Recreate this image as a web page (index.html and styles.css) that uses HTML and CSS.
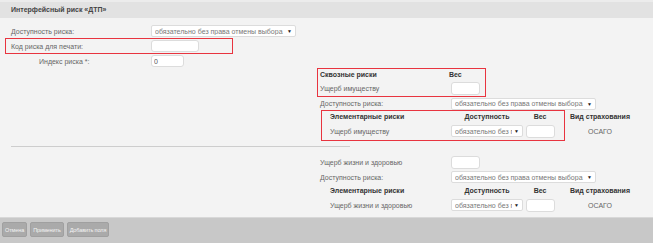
FILE: index.html
```html
<!DOCTYPE html>
<html lang="ru">
<head>
    <meta charset="UTF-8">
    <title>Интерфейсный риск</title>
    <link rel="stylesheet" href="styles.css">
</head>
<body>
    <div class="panel-title">Интерфейсный риск «ДТП»</div>

    <div class="form">
        <div class="row">
            <span class="label">Доступность риска:</span>
            <div class="select wide"><span class="select-text">обязательно без права отмены выбора</span><span class="caret">▼</span></div>
        </div>
        <div class="row marked">
            <span class="label">Код риска для печати:</span>
            <input class="field code" type="text">
        </div>
        <div class="row">
            <span class="label indent">Индекс риска *:</span>
            <input class="field index" type="text" value="0">
        </div>

        <div class="side">
            <div class="through marked">
                <div class="through-row head">
                    <span class="through-name">Сквозные риски</span>
                    <span>Вес</span>
                </div>
                <div class="through-row">
                    <span class="through-name">Ущерб имуществу</span>
                    <input class="field weight" type="text">
                </div>
            </div>
            <div class="side-row">
                <span class="side-label">Доступность риска:</span>
                <div class="select wide"><span class="select-text">обязательно без права отмены выбора</span><span class="caret">▼</span></div>
            </div>
            <div class="elem">
                <div class="elem-grid marked">
                    <span class="cell th left">Элементарные риски</span>
                    <span class="cell th">Доступность</span>
                    <span class="cell th">Вес</span>
                    <span class="cell left">Ущерб имуществу</span>
                    <span class="cell"><span class="select short"><span class="select-text">обязательно без г</span><span class="caret">▼</span></span></span>
                    <span class="cell"><input class="field weight" type="text"></span>
                </div>
                <div class="elem-kind">
                    <span class="cell th">Вид страхования</span>
                    <span class="cell">ОСАГО</span>
                </div>
            </div>
        </div>

        <hr class="divider">

        <div class="side">
            <div class="side-row life">
                <span class="side-label">Ущерб жизни и здоровью</span>
                <input class="field weight" type="text">
            </div>
            <div class="side-row">
                <span class="side-label">Доступность риска:</span>
                <div class="select wide"><span class="select-text">обязательно без права отмены выбора</span><span class="caret">▼</span></div>
            </div>
            <div class="elem">
                <div class="elem-grid">
                    <span class="cell th left">Элементарные риски</span>
                    <span class="cell th">Доступность</span>
                    <span class="cell th">Вес</span>
                    <span class="cell left">Ущерб жизни и здоровью</span>
                    <span class="cell"><span class="select short"><span class="select-text">обязательно без г</span><span class="caret">▼</span></span></span>
                    <span class="cell"><input class="field weight" type="text"></span>
                </div>
                <div class="elem-kind">
                    <span class="cell th">Вид страхования</span>
                    <span class="cell">ОСАГО</span>
                </div>
            </div>
        </div>
    </div>

    <div class="footer">
        <button class="btn">Отмена</button>
        <button class="btn">Применить</button>
        <button class="btn">Добавить поля</button>
    </div>
</body>
</html>
```

FILE: styles.css
```css
/* Base */
body {
    margin: 0;
    background: #f3f3f3;
    font-family: "Liberation Sans", Arial, sans-serif;
    font-size: 7px;
    color: #666;
}

.panel-title {
    height: 16px;
    line-height: 16px;
    padding-left: 11px;
    border-top: 2px solid #ececec;
    background: #e2e2e2;
    font-weight: bold;
    color: #444;
}

.form {
    padding-top: 6px;
}

/* Left column rows */
.row {
    display: flex;
    align-items: center;
    height: 14px;
    padding-left: 11px;
}

.label {
    box-sizing: border-box;
    width: 140px;
}

.label.indent {
    padding-left: 28px;
}

.row.marked {
    width: 221px;
    margin-left: 5px;
    padding-left: 5px;
}

.marked {
    border: 1px solid #e8343f !important;
}

/* Controls */
.field {
    box-sizing: border-box;
    height: 12px;
    margin: 0;
    padding: 0 2px;
    border: 1px solid #dcdcdc;
    border-radius: 3px;
    background: #fff;
    font-family: inherit;
    font-size: 7px;
    color: #555;
    outline: none;
}

.field.code {
    width: 48px;
}

.field.index {
    width: 33px;
}

.field.weight {
    width: 29px;
    height: 13px;
}

.select {
    box-sizing: border-box;
    display: flex;
    align-items: center;
    height: 12px;
    padding: 0 3px;
    border: 1px solid #dcdcdc;
    border-radius: 2px;
    background: #fff;
    color: #777;
}

.select.wide {
    width: 145px;
}

.select.short {
    width: 72px;
}

.select-text {
    flex: 1;
    overflow: hidden;
    white-space: nowrap;
}

.caret {
    margin-left: 2px;
    font-size: 5px;
    color: #222;
}

/* Right side blocks */
.side {
    margin-left: 317px;
}

.through {
    box-sizing: border-box;
    width: 169px;
    padding-left: 2px;
    border: 1px solid transparent;
}

.through-row {
    display: flex;
    align-items: center;
    height: 16px;
}

.through-row.head {
    height: 11px;
    font-weight: bold;
    color: #333;
}

.through-name {
    width: 129px;
}

.through-row .weight {
    margin-left: 2px;
}

.side-row {
    display: flex;
    align-items: center;
    height: 13px;
    padding-left: 3px;
}

.side-row.life {
    height: 15px;
    margin-top: 8px;
}

.side-row.life + .side-row {
    height: 14px;
}

.side-label {
    width: 131px;
}

.elem {
    display: flex;
    margin-left: 4px;
}

.elem-grid {
    display: grid;
    grid-template-columns: 120px 74px 32px;
    grid-template-rows: 11px 18px;
    padding: 0 8px;
    border: 1px solid transparent;
}

.elem-kind {
    display: grid;
    grid-template-rows: 11px 18px;
    width: 68px;
    margin-left: 1px;
    padding-top: 1px;
}

.cell {
    display: flex;
    align-items: center;
    justify-content: center;
    white-space: nowrap;
}

.cell.left {
    justify-content: flex-start;
}

.th {
    font-weight: bold;
    color: #333;
}

.divider {
    width: 339px;
    height: 0;
    margin: 5px 0 0 11px;
    border: 0;
    border-top: 1px solid #cdcdcd;
}

/* Bottom toolbar */
.footer {
    display: flex;
    align-items: flex-start;
    gap: 3px;
    height: 21px;
    margin-top: 2px;
    padding: 4px 0 0 2px;
    border-top: 1px solid #d8d8d8;
    background: #c8c8c8;
}

.btn {
    height: 15px;
    padding: 0 2px;
    border: 1px solid #a0a0a0;
    border-radius: 2px;
    background: #aaa;
    font-family: inherit;
    font-size: 5.5px;
    letter-spacing: -0.1px;
    color: #f4f4f4;
}
```
